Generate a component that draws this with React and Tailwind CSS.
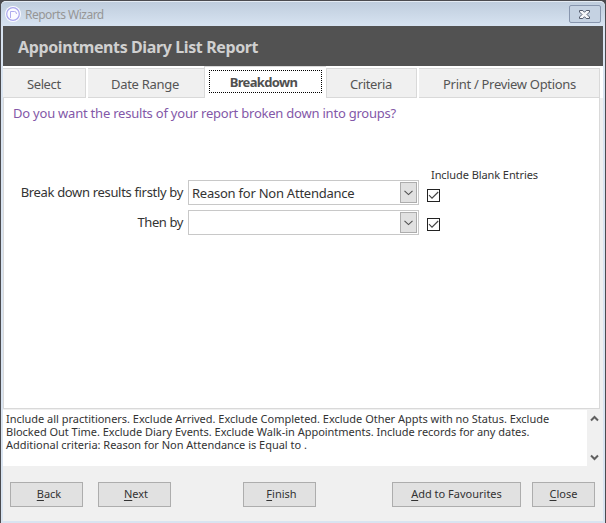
const tabs = [
  { label: "Select", className: "mt-0.5 w-[83px] border-r pl-6", text: "tracking-[-0.4px]" },
  { label: "Date Range", className: "mt-0.5 ml-0.5 w-[116px] pl-[23px]", text: "tracking-[-0.3px]" },
  { label: "Breakdown", active: true },
  { label: "Criteria", className: "mt-0.5 w-[91px] border-r border-l pl-[23px]", text: "tracking-[-0.4px]" },
  { label: "Print / Preview Options", className: "mt-0.5 ml-0.5 w-[181px] border-r pl-6", text: "tracking-[-0.3px]" }
];

const summary = [
  "Include all practitioners. Exclude Arrived. Exclude Completed. Exclude Other Appts with no Status. Exclude",
  "Blocked Out Time. Exclude Diary Events. Exclude Walk-in Appointments. Include records for any dates.",
  "Additional criteria: Reason for Non Attendance is Equal to ."
];

const buttons = [
  { label: "Back", className: "w-[73px] pl-[5px]" },
  { label: "Next", className: "ml-[15px] w-[73px] pl-[3px]" },
  { label: "Finish", className: "ml-[72px] w-[73px] pl-1" },
  { label: "Add to Favourites", className: "ml-[76px] w-[129px]" },
  { label: "Close", className: "ml-[11px] w-[63px]" }
];

function AppIcon() {
  return (
    <svg width="16" height="16" viewBox="0 0 16 16" fill="none">
      <circle cx="8" cy="8" r="8" fill="#fbfbff" />
      <circle cx="8" cy="8" r="6.3" stroke="#a9a6ee" strokeWidth="1.2" />
      <path d="M5.5 12V5.5H9.5Q11.5 5.5 11.5 8" stroke="#aeabee" strokeWidth="1" />
    </svg>
  );
}

function CloseIcon() {
  return (
    <svg width="11" height="9" viewBox="0 0 11 9">
      <path d="M0.5 0.5H3.8L5.5 2.3L7.2 0.5H10.5V2L8 4.5L10.5 7V8.5H7.2L5.5 6.7L3.8 8.5H0.5V7L3 4.5L0.5 2Z" fill="#f6f7fa" stroke="#525a6c" strokeWidth="1" />
    </svg>
  );
}

function Combo({ value }) {
  return (
    <div className="flex h-[25px] w-[231px] items-center justify-between border border-[#c8c8c8] bg-white pr-px pl-[3px]">
      <span className="pt-0.5 text-[13px] tracking-[-0.24px] whitespace-nowrap">{value}</span>
      <span className="flex h-[21px] w-[17px] items-center justify-center border border-[#adadad] bg-[#e1e1e1]">
        <svg width="9" height="6" viewBox="0 0 9 6" fill="none">
          <path d="M0.5 0.8L4.5 4.6L8.5 0.8" stroke="#505050" strokeWidth="1.1" />
        </svg>
      </span>
    </div>
  );
}

function Check() {
  return (
    <span className="flex size-[13px] items-center justify-center border border-[#222] bg-white">
      <svg width="11" height="11" viewBox="0 0 11 11" fill="none">
        <path d="M1 5.2L4 8.2L10.2 2" stroke="#444" strokeWidth="1.15" />
      </svg>
    </span>
  );
}

export default function App() {
  return (
    <div className="h-[523px] w-[606px] overflow-hidden bg-[#4b4b4f] pt-px pr-px pl-px font-['Noto_Sans','Open_Sans',sans-serif] text-[#333]">
      <div className="flex h-[522px] flex-col rounded-t-[5px] bg-[#d9e4f1]">
        <div className="flex h-[25px] shrink-0 items-center justify-between rounded-t-[5px] border-t border-[#e4ebf3] bg-linear-to-b from-[#bfcddd] to-[#d7e3f1] pr-1 pl-1">
          <div className="flex items-center gap-1">
            <AppIcon />
            <span className="pt-0.5 text-[12px] leading-4 tracking-[-0.5px] text-[#969696]">Reports Wizard</span>
          </div>
          <div className="flex h-[18px] w-8 items-center justify-center rounded-[2px] border border-[#8896ae] bg-[#c5d2e2] pr-px">
            <CloseIcon />
          </div>
        </div>

        <div className="mx-0.5 flex h-[495px] flex-col bg-[#f0f0f0]">
          <div className="flex h-10 shrink-0 items-center bg-[#525252] pt-px pl-[15px]">
            <h1 className="text-[16px] font-bold tracking-[-0.39px] whitespace-nowrap text-[#d0d0d0]">Appointments Diary List Report</h1>
          </div>

          <div className="flex h-8 shrink-0 bg-white">
            {tabs.map((tab) => tab.active ? (
              <div key={tab.label} className="h-8 w-[122px] border-t border-l border-[#d9d9d9] bg-white pt-[3px] pl-1">
                <div className="flex h-[23px] w-[113px] justify-center border border-dotted border-black pr-1 text-[13px] leading-[22px] font-bold tracking-[-0.65px] text-[#505050]">
                  <span>{tab.label}</span>
                </div>
              </div>
            ) : (
              <div key={tab.label} className={`${tab.className} h-[30px] border-t border-b border-[#d9d9d9] bg-[#f0f0f0] text-[13px] leading-[31px] whitespace-nowrap text-[#555]`}>
                <span className={tab.text}>{tab.label}</span>
              </div>
            ))}
          </div>

          <div className="mr-[3px] h-[311px] shrink-0 border-r border-b border-l border-[#d9d9d9] bg-white">
            <p className="h-[73px] pt-1.5 pl-[9px] text-[13px] leading-[18px] tracking-[-0.22px] whitespace-nowrap text-[#8358a8]">Do you want the results of your report broken down into groups?</p>
            <p className="h-[9px] pl-[427px] text-[11px] leading-[7px] tracking-[-0.08px] whitespace-nowrap">Include Blank Entries</p>
            <div className="flex h-[25px] items-start">
              <span className="w-[179px] text-right text-[13px] leading-[25px] tracking-[-0.33px] whitespace-nowrap">Break down results firstly by</span>
              <div className="ml-[5px]"><Combo value="Reason for Non Attendance" /></div>
              <div className="mt-[9px] ml-2"><Check /></div>
            </div>
            <div className="mt-[5px] flex h-[25px] items-start">
              <span className="w-[179px] text-right text-[13px] leading-[25px] tracking-[-0.4px] whitespace-nowrap">Then by</span>
              <div className="ml-[5px]"><Combo value="" /></div>
              <div className="mt-2 ml-2"><Check /></div>
            </div>
          </div>

          <div className="mt-px flex h-14 shrink-0">
            <p className="w-[584px] bg-white pt-0.5 pl-[3px] text-[11px] leading-[13px] tracking-[-0.02px] whitespace-pre">{summary.join("\n")}</p>
            <div className="ml-[3px] flex w-[9px] flex-col items-center justify-between py-[5px] text-[#606060]">
              <svg width="9" height="7" viewBox="0 0 9 7" fill="none">
                <path d="M1 5.5L4.5 2L8 5.5" stroke="currentColor" strokeWidth="2" />
              </svg>
              <svg width="9" height="7" viewBox="0 0 9 7" fill="none">
                <path d="M1 1.5L4.5 5L8 1.5" stroke="currentColor" strokeWidth="2" />
              </svg>
            </div>
          </div>

          <div className="flex pt-4 pl-[7px]">
            {buttons.map((button) => (
              <button key={button.label} type="button" className={`${button.className} h-[25px] border border-[#adadad] bg-[#e1e1e1] pb-px text-[11px] leading-[22px] whitespace-nowrap`}>
                <span className="underline underline-offset-2">{button.label[0]}</span>{button.label.slice(1)}
              </button>
            ))}
          </div>
        </div>
      </div>
    </div>
  );
}
